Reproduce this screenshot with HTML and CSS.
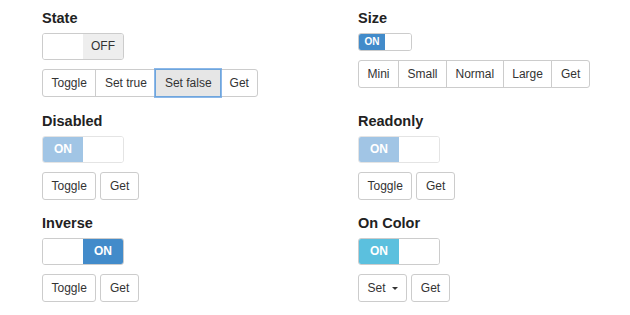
FILE: index.html
```html
<!DOCTYPE html>
<html lang="en">
<head>
    <meta charset="UTF-8">
    <meta name="viewport" content="width=device-width, initial-scale=1.0">
    <title>Bootstrap Switch - Options</title>
    <link rel="stylesheet" href="styles.css">
</head>
<body>
    <div class="grid">
        <div class="section">
            <h4>State</h4>
            <div class="switch">
                <span class="handle"></span>
                <span class="handle off">OFF</span>
            </div>
            <div class="btn-group">
                <button class="btn">Toggle</button>
                <button class="btn">Set true</button>
                <button class="btn active">Set false</button>
                <button class="btn">Get</button>
            </div>
        </div>

        <div class="section">
            <h4>Size</h4>
            <div class="switch mini">
                <span class="handle on">ON</span>
                <span class="handle"></span>
            </div>
            <div class="btn-group">
                <button class="btn">Mini</button>
                <button class="btn">Small</button>
                <button class="btn">Normal</button>
                <button class="btn">Large</button>
                <button class="btn">Get</button>
            </div>
        </div>

        <div class="section">
            <h4>Disabled</h4>
            <div class="switch dim">
                <span class="handle on">ON</span>
                <span class="handle"></span>
            </div>
            <div class="btns">
                <button class="btn">Toggle</button>
                <button class="btn">Get</button>
            </div>
        </div>

        <div class="section">
            <h4>Readonly</h4>
            <div class="switch dim">
                <span class="handle on">ON</span>
                <span class="handle"></span>
            </div>
            <div class="btns">
                <button class="btn">Toggle</button>
                <button class="btn">Get</button>
            </div>
        </div>

        <div class="section">
            <h4>Inverse</h4>
            <div class="switch">
                <span class="handle"></span>
                <span class="handle on">ON</span>
            </div>
            <div class="btns">
                <button class="btn">Toggle</button>
                <button class="btn">Get</button>
            </div>
        </div>

        <div class="section">
            <h4>On Color</h4>
            <div class="switch">
                <span class="handle on info">ON</span>
                <span class="handle"></span>
            </div>
            <div class="btns">
                <button class="btn">Set <span class="caret"></span></button>
                <button class="btn">Get</button>
            </div>
        </div>
    </div>
</body>
</html>
```

FILE: styles.css
```css
body {
    margin: 0;
    padding: 9px 0 0 42px;
    background: #fff;
    font-family: "Liberation Sans", Arial, sans-serif;
    color: #333;
}
.grid {
    display: grid;
    grid-template-columns: 316px 1fr;
    row-gap: 14.5px;
}
h4 {
    margin: 0 0 6px;
    font-size: 14.5px;
    line-height: 18px;
    font-weight: bold;
    color: #222;
}
.switch {
    display: flex;
    width: max-content;
    height: 25px;
    border: 1px solid #ccc;
    border-radius: 3px;
    overflow: hidden;
}
.handle {
    width: 40px;
    font-size: 12px;
    line-height: 25px;
    text-align: center;
    background: #fff;
}
.handle.off {
    background: #eee;
    color: #333;
}
.handle.on {
    background: #428bca;
    color: #fff;
    font-weight: bold;
}
.handle.info {
    background: #5bc0de;
}
.switch.dim {
    border-color: #e4e4e4;
}
.switch.dim .handle.on {
    background: #a1c5e5;
}
.switch.mini {
    height: 16px;
}
.switch.mini .handle {
    width: 26px;
    font-size: 10px;
    line-height: 16px;
}
.btn-group,
.btns {
    display: flex;
    margin-top: 9px;
}
.btns {
    gap: 4px;
}
.btn {
    height: 28px;
    padding: 0 8.5px;
    border: 1px solid #ccc;
    border-radius: 3px;
    background: #fff;
    color: #333;
    font-family: inherit;
    font-size: 12px;
    line-height: 26px;
}
.btn-group .btn {
    border-radius: 0;
    margin-left: -1px;
}
.btn-group .btn:first-child {
    margin-left: 0;
    border-radius: 3px 0 0 3px;
}
.btn-group .btn:last-child {
    border-radius: 0 3px 3px 0;
}
.btn.active {
    position: relative;
    background: #e6e6e6;
    border-color: #6ea5dc;
    box-shadow: 0 0 0 1px rgba(102, 160, 225, 0.75);
}
.caret {
    display: inline-block;
    margin-left: 3px;
    vertical-align: middle;
    border-top: 3.5px solid #333;
    border-left: 3.5px solid transparent;
    border-right: 3.5px solid transparent;
}
```
